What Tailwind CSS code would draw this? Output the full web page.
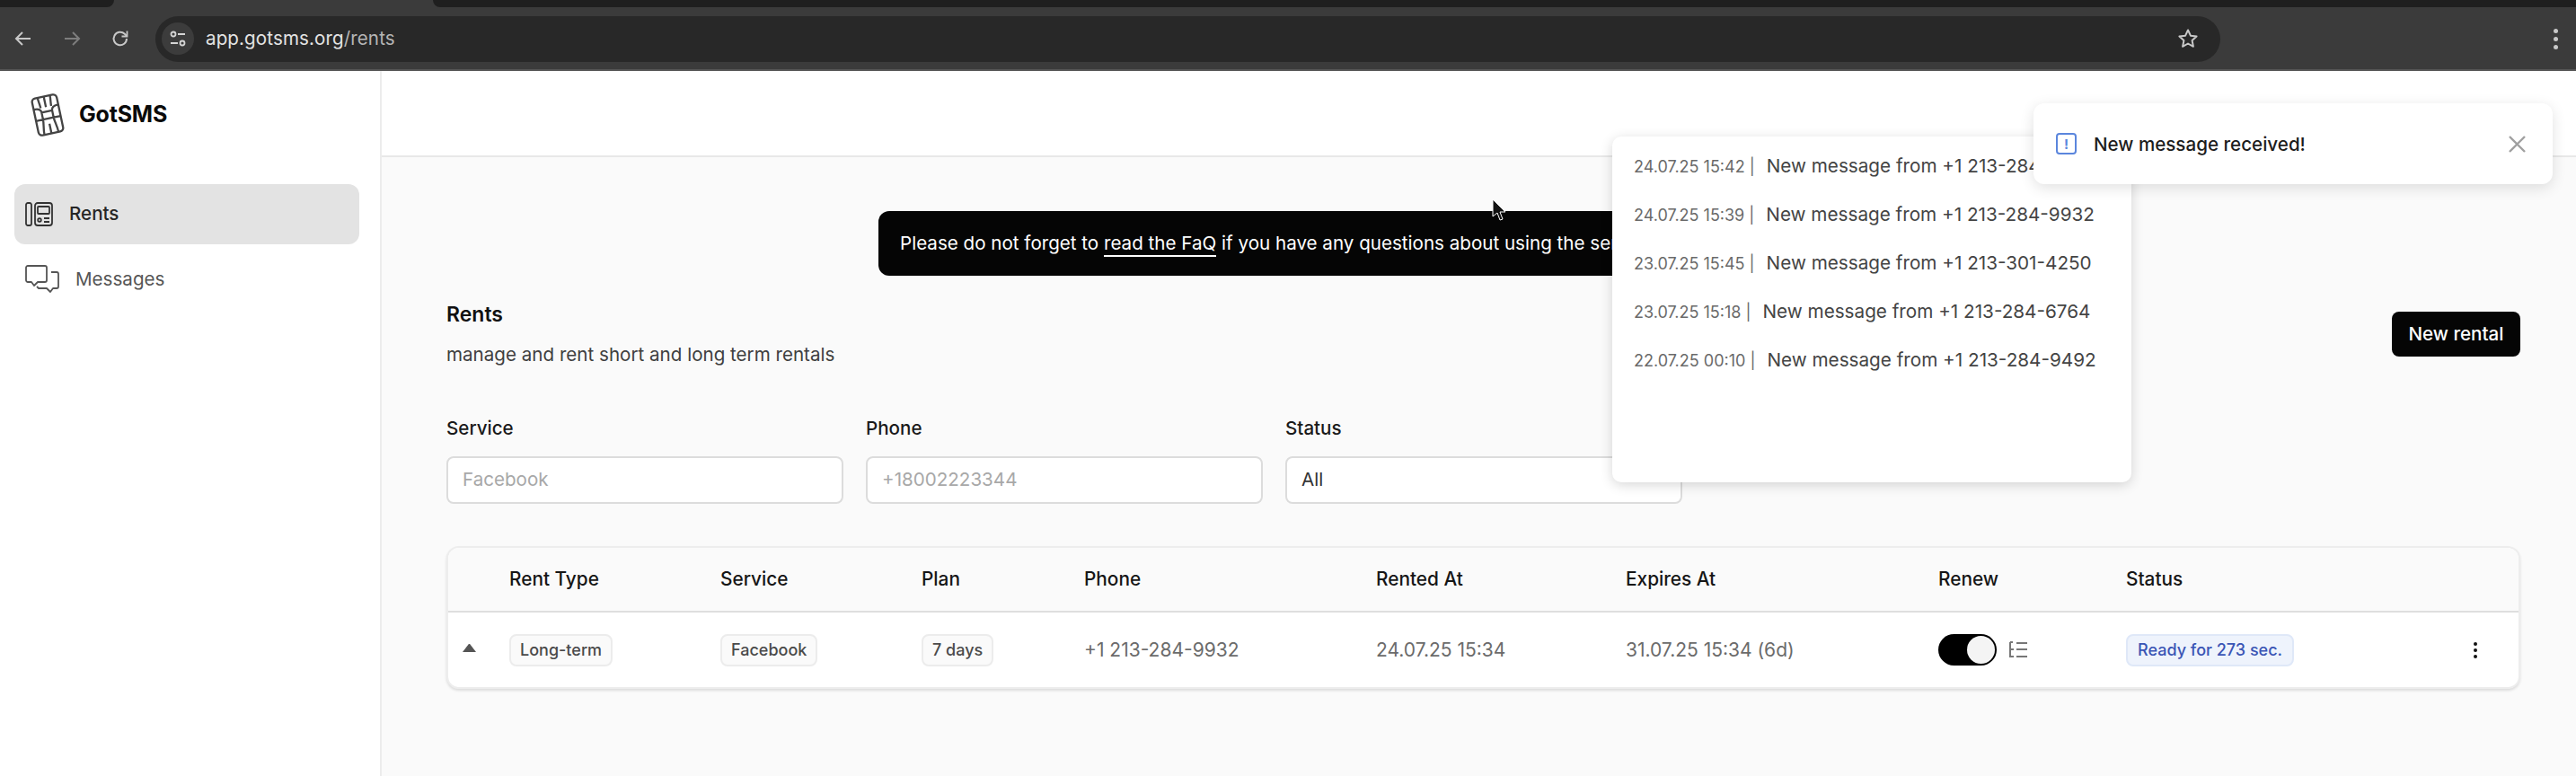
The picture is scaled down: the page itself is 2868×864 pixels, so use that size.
<!DOCTYPE html>
<html>
<head>
<meta charset="utf-8">
<script src="https://cdn.jsdelivr.net/npm/@tailwindcss/browser@4"></script>
</head>
<body class="font-['Inter',sans-serif] bg-white">
<div class="relative w-[2868px] h-[864px] overflow-hidden flex flex-col">
  <!-- browser chrome -->
  <div class="h-[79px] shrink-0 bg-[#3b3b3b] border-b-2 border-[#555] relative flex items-center pt-[9px] text-[#c8c8c8]">
    <div class="absolute left-0 top-0 w-[127px] h-[8px] bg-[#1f1f1f] rounded-br-lg"></div>
    <div class="absolute left-[482px] right-0 top-0 h-[8px] bg-[#1f1f1f] rounded-bl-lg"></div>
    <div class="flex items-center gap-[34px] pl-[16px] w-[173px] shrink-0">
      <svg class="w-[20px] h-[20px]" viewBox="0 0 20 20" fill="none" stroke="#c8c8c8" stroke-width="2"><path d="M18 10H2M9 3l-7 7 7 7"/></svg>
      <svg class="w-[20px] h-[20px]" viewBox="0 0 20 20" fill="none" stroke="#7d7d7d" stroke-width="2"><path d="M2 10h16M11 3l7 7-7 7"/></svg>
      <svg class="w-[20px] h-[20px]" viewBox="0 0 20 20" fill="none" stroke="#c8c8c8" stroke-width="2"><path d="M17 10a7.2 7.2 0 1 1-2.2-5.2L17 7"/><path d="M17.500 1.500V7.500H11.500" stroke-width="1.800"/></svg>
    </div>
    <div class="w-[2299px] h-[51px] rounded-full bg-[#282828] flex items-center pl-[7px] pr-[24px]">
      <div class="w-[36px] h-[36px] rounded-full bg-[#3c3c3c] flex items-center justify-center">
        <svg class="w-[20px] h-[20px]" viewBox="0 0 20 20" fill="none" stroke="#d5d5d5" stroke-width="1.800"><circle cx="5" cy="5" r="2.500"/><path d="M10 5h8M2 15h8"/><circle cx="15" cy="15" r="2.500"/></svg>
      </div>
      <div class="ml-[13px] text-[20.6px] text-[#e3e3e3] tracking-[0.1px]">app.gotsms.org<span class="text-[#b5b5b5]">/rents</span></div>
      <svg class="w-[24px] h-[24px] ml-auto" viewBox="0 0 24 24" fill="none" stroke="#c8c8c8" stroke-width="2" stroke-linejoin="round"><path d="M12 2.500l2.900 6.200 6.700.8-5 4.600 1.300 6.700-5.900-3.300-5.900 3.300 1.300-6.700-5-4.600 6.700-.8z"/></svg>
    </div>
    <div class="ml-auto mr-[20px] flex flex-col gap-[4px]">
      <div class="w-[5px] h-[5px] rounded-full bg-[#c8c8c8]"></div>
      <div class="w-[5px] h-[5px] rounded-full bg-[#c8c8c8]"></div>
      <div class="w-[5px] h-[5px] rounded-full bg-[#c8c8c8]"></div>
    </div>
  </div>

  <div class="flex flex-1 min-h-0">
    <!-- sidebar -->
    <aside class="w-[425px] shrink-0 border-r-2 border-[#ececec] bg-white">
      <div class="flex items-center pl-[32px] h-[97px] mb-[29px]">
        <svg class="w-[42px] h-[48px]" viewBox="0 0 42 48" fill="none" stroke="#444" stroke-width="2.300" stroke-linejoin="round">
          <g transform="rotate(-12 21 24)">
            <rect x="7" y="3" width="28" height="42" rx="4"/>
            <path d="M7 15c5 0 8 1 8 5M14 3c0 5 1 8 1 12M28 3c0 5-1 8-1 12M35 15c-5 0-8 1-8 5M15 20h12M7 28h8M35 28h-8M15 20v8M27 20v8M15 28c0 5-2 10-2 17M27 28c0 5 2 10 2 17M15 28h12M21 3v12M21 34v11"/>
          </g>
        </svg>
        <span class="ml-[14px] text-[25px] font-bold text-[#0a0a0a] tracking-[-0.2px]">GotSMS</span>
      </div>
      <nav class="pl-[16px] pr-[23px] flex flex-col">
        <div class="h-[67px] rounded-[12px] bg-[#e3e3e3] flex items-center pl-[12px] gap-[18px]">
          <svg class="w-[31px] h-[27px]" viewBox="0 0 31 27" fill="none" stroke="#333" stroke-width="1.800"><rect x="1" y="1" width="6" height="25" rx="2"/><rect x="11" y="1" width="19" height="25" rx="3"/><rect x="14" y="5" width="13" height="8" rx="1"/><circle cx="16" cy="20" r="1.800"/><path d="M21 18h6M21 22h6"/></svg>
          <span class="text-[20.6px] font-medium text-[#262626]">Rents</span>
        </div>
        <div class="h-[78px] flex items-center pl-[12px] gap-[18px]">
          <svg class="w-[38px] h-[32px]" viewBox="0 0 38 32" fill="none" stroke="#555" stroke-width="1.800" stroke-linejoin="round"><path d="M3 1h19a2 2 0 0 1 2 2v14a2 2 0 0 1-2 2H14l-4 4-3-4H3a2 2 0 0 1-2-2V3a2 2 0 0 1 2-2z"/><path d="M29 8h6a2 2 0 0 1 2 2v14a2 2 0 0 1-2 2h-4l-3 4-4-4h-9l-2-2"/></svg>
          <span class="text-[20.6px] text-[#555]">Messages</span>
        </div>
      </nav>
    </aside>

    <!-- main -->
    <main class="flex-1 bg-[#fafafa] min-w-0">
      <div class="h-[96px] bg-white border-b-2 border-[#e8e8e8]"></div>
      <div class="pl-[72px] pr-[62px]">
        <div class="mt-[60px] ml-[481px] w-[1000px] h-[72px] bg-[#050505] rounded-[12px] flex items-center pl-[24px] text-[20.6px] text-white">
          <span>Please do not forget to <span class="border-b-2 border-white pb-[1px]">read the FaQ</span> if you have any questions about using the service.</span>
        </div>
        <div class="mt-[28px] flex items-start justify-between">
          <div>
            <h1 class="text-[23px] font-semibold leading-[30px] text-[#111]">Rents</h1>
            <p class="mt-[16px] text-[20.6px] leading-[28px] text-[#3f3f3f]">manage and rent short and long term rentals</p>
          </div>
          <button class="mt-[12px] h-[50px] w-[143px] rounded-[8px] bg-[#050505] text-white text-[20.6px] font-medium">New rental</button>
        </div>
        <div class="mt-[54px] flex gap-[25px]">
          <div class="w-[442px]">
            <div class="text-[20.6px] font-medium text-[#1a1a1a] leading-[28px]">Service</div>
            <div class="mt-[17px] h-[53px] rounded-[8px] border-2 border-[#dcdcdc] bg-white flex items-center pl-[16px] text-[20.6px] text-[#a8a8a8]">Facebook</div>
          </div>
          <div class="w-[442px]">
            <div class="text-[20.6px] font-medium text-[#1a1a1a] leading-[28px]">Phone</div>
            <div class="mt-[17px] h-[53px] rounded-[8px] border-2 border-[#dcdcdc] bg-white flex items-center pl-[16px] text-[20.6px] text-[#a8a8a8]">+18002223344</div>
          </div>
          <div class="w-[442px]">
            <div class="text-[20.6px] font-medium text-[#1a1a1a] leading-[28px]">Status</div>
            <div class="mt-[17px] h-[53px] rounded-[8px] border-2 border-[#dcdcdc] bg-white flex items-center pl-[16px] text-[20.6px] text-[#333]">All</div>
          </div>
        </div>
        <div class="mt-[47px] rounded-[14px] border-2 border-[#ededed] shadow-[0_2px_3px_rgba(0,0,0,0.12)] overflow-hidden bg-white">
          <div class="grid grid-cols-[68px_235px_224px_181px_325px_278px_348px_209px_1fr_60px] h-[72px] items-center bg-[#fafafa] border-b-2 border-[#dedede] text-[20.8px] font-medium text-[#161616]">
            <div></div>
            <div>Rent Type</div>
            <div>Service</div>
            <div>Plan</div>
            <div>Phone</div>
            <div>Rented At</div>
            <div>Expires At</div>
            <div>Renew</div>
            <div>Status</div>
            <div></div>
          </div>
          <div class="grid grid-cols-[68px_235px_224px_181px_325px_278px_348px_209px_1fr_60px] h-[83px] items-center text-[21px] text-[#6b6b6b]">
            <div class="pl-[18px]"><svg class="w-[15px] h-[9px] mt-[-4px] -ml-[2px]" viewBox="0 0 15 9" fill="#555"><path d="M6.500 .5a1.300 1.300 0 0 1 2 0L15 9H0z"/></svg></div>
            <div><span class="inline-flex items-center h-[36px] px-[10px] rounded-[8px] border-2 border-[#ececec] bg-[#fafafa] text-[18px] font-medium text-[#4a4a4a]">Long-term</span></div>
            <div><span class="inline-flex items-center h-[36px] px-[10px] rounded-[8px] border-2 border-[#ececec] bg-[#fafafa] text-[18px] font-medium text-[#4a4a4a]">Facebook</span></div>
            <div><span class="inline-flex items-center h-[36px] px-[10px] rounded-[8px] border-2 border-[#ececec] bg-[#fafafa] text-[18px] font-medium text-[#4a4a4a]">7 days</span></div>
            <div>+1 213-284-9932</div>
            <div>24.07.25 15:34</div>
            <div>31.07.25 15:34 (6d)</div>
            <div class="flex items-center gap-[13px]">
              <div class="w-[65px] h-[35px] rounded-full bg-black flex items-center justify-end pr-[2px]"><div class="w-[31px] h-[31px] rounded-full bg-[#f4f4f4]"></div></div>
              <svg class="w-[22px] h-[20px]" viewBox="0 0 22 20" fill="none" stroke="#777" stroke-width="2"><path d="M2 1v16h4M2 9h4M2 1h3M9 2h12M9 9h12M9 17h12"/></svg>
            </div>
            <div><span class="inline-flex items-center h-[36px] px-[11px] rounded-[8px] border-2 border-[#dfe8f8] bg-[#eef3fc] text-[18px] font-medium text-[#3a55b5]">Ready for 273 sec.</span></div>
            <div class="flex justify-center pr-[36px]">
              <div class="flex flex-col gap-[3px]"><div class="w-[4px] h-[4px] rounded-full bg-[#111]"></div><div class="w-[4px] h-[4px] rounded-full bg-[#111]"></div><div class="w-[4px] h-[4px] rounded-full bg-[#111]"></div></div>
            </div>
          </div>
        </div>
      </div>
    </main>
  </div>

  <!-- cursor -->
  <svg class="absolute left-[1661px] top-[221px] w-[16px] h-[25px]" viewBox="0 0 16 25" fill="#111" stroke="#fff" stroke-width="1"><path d="M1 1v19l5-4 3 8 3-1-3-8h6z"/></svg>

  <!-- messages popup -->
  <div class="absolute left-[1795px] top-[152px] w-[578px] h-[385px] bg-white rounded-[10px] shadow-[0_3px_14px_rgba(0,0,0,0.16)] pt-[6px] pl-[24px] flex flex-col">
    <div class="h-[54px] flex items-center whitespace-nowrap"><span class="text-[18px] text-[#6a6a6a]">24.07.25 15:42 |</span><span class="ml-[13px] text-[20.7px] text-[#444]">New message from +1 213-284-9932</span></div>
    <div class="h-[54px] flex items-center whitespace-nowrap"><span class="text-[18px] text-[#6a6a6a]">24.07.25 15:39 |</span><span class="ml-[13px] text-[20.7px] text-[#444]">New message from +1 213-284-9932</span></div>
    <div class="h-[54px] flex items-center whitespace-nowrap"><span class="text-[18px] text-[#6a6a6a]">23.07.25 15:45 |</span><span class="ml-[13px] text-[20.7px] text-[#444]">New message from +1 213-301-4250</span></div>
    <div class="h-[54px] flex items-center whitespace-nowrap"><span class="text-[18px] text-[#6a6a6a]">23.07.25 15:18 |</span><span class="ml-[13px] text-[20.7px] text-[#444]">New message from +1 213-284-6764</span></div>
    <div class="h-[54px] flex items-center whitespace-nowrap"><span class="text-[18px] text-[#6a6a6a]">22.07.25 00:10 |</span><span class="ml-[13px] text-[20.7px] text-[#444]">New message from +1 213-284-9492</span></div>
  </div>

  <!-- toast -->
  <div class="absolute left-[2264px] top-[115px] w-[578px] h-[90px] bg-white rounded-[12px] shadow-[0_4px_16px_rgba(0,0,0,0.12)] flex items-center pl-[25px]">
    <div class="w-[23px] h-[24px] rounded-[4px] border-2 border-[#5b86dd] flex items-center justify-center text-[#5b86dd] text-[15px] font-bold leading-none">!</div>
    <span class="ml-[19px] mt-[2px] text-[20.6px] font-medium text-[#1d1d1d]">New message received!</span>
    <svg class="absolute right-[30px] top-[36px] w-[19px] h-[19px]" viewBox="0 0 19 19" fill="none" stroke="#a0a0a0" stroke-width="2.400"><path d="M1 1l17 17M18 1L1 18"/></svg>
  </div>
</div>
</body>
</html>
